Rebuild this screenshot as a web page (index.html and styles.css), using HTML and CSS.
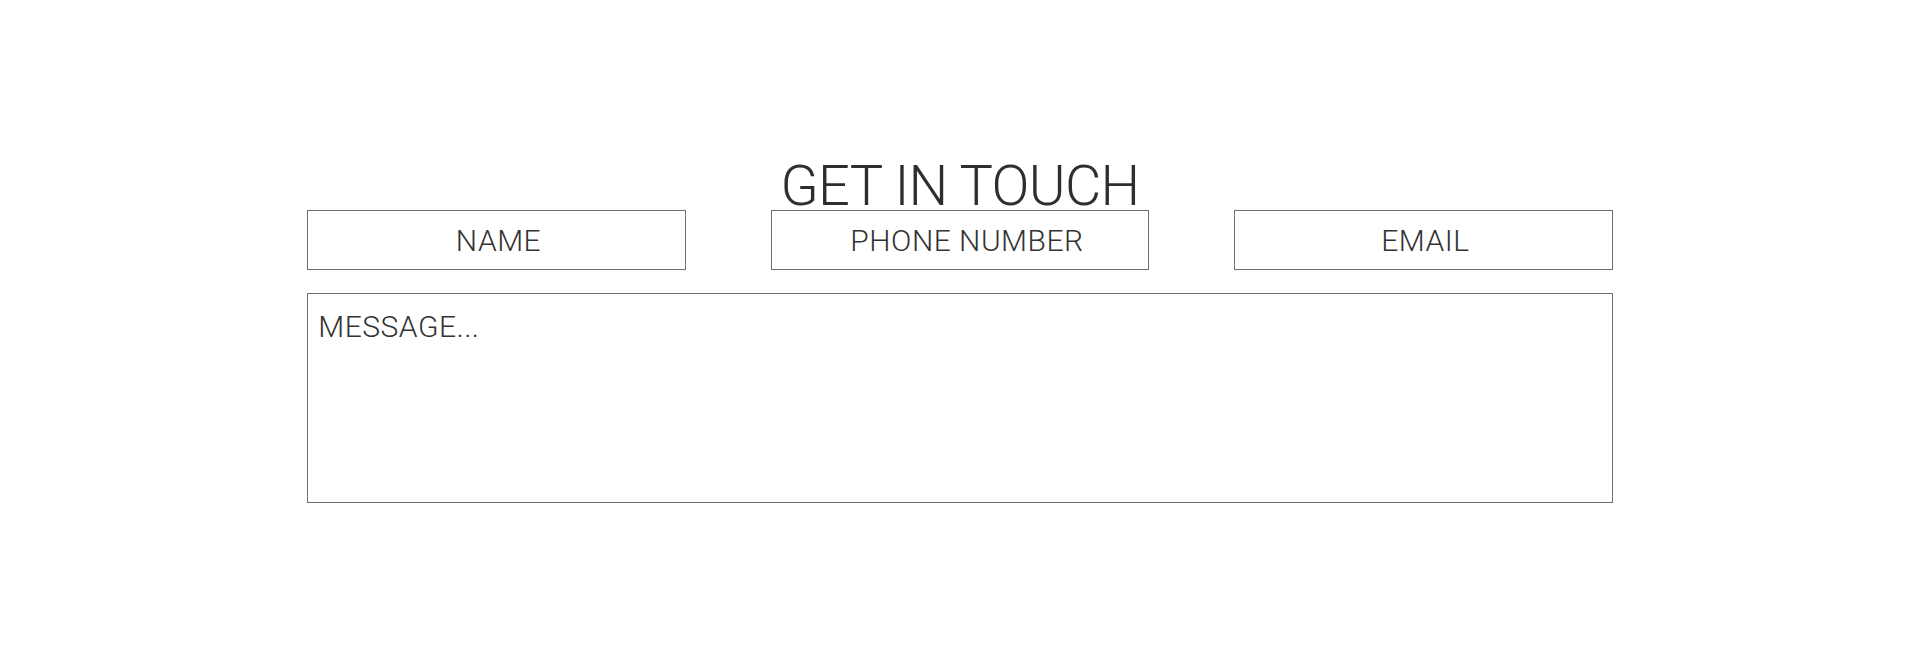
FILE: index.html
```html
<!DOCTYPE html>
<html lang="en">
<head>
<meta charset="utf-8">
<title>Get in touch</title>
<link rel="stylesheet" href="styles.css">
</head>
<body>
<section class="contact">
  <h1 class="contact-title">GET IN TOUCH</h1>
  <form class="contact-form">
    <div class="contact-row">
      <input class="contact-field" type="text" placeholder="NAME">
      <input class="contact-field contact-field--phone" type="tel" placeholder="PHONE NUMBER">
      <input class="contact-field" type="email" placeholder="EMAIL">
    </div>
    <textarea class="contact-message" placeholder="MESSAGE..."></textarea>
  </form>
</section>
</body>
</html>
```

FILE: styles.css
```css
html, body {
  margin: 0;
  padding: 0;
  background: #ffffff;
}

body {
  font-family: Roboto, "Liberation Sans", Arial, sans-serif;
  font-weight: 300;
  color: #333333;
}

.contact {
  width: 68%;
  margin: 0 auto;
  padding-top: 162px;
}

.contact-title {
  margin: 0;
  text-align: center;
  font-size: 56px;
  line-height: 48px;
  letter-spacing: -0.7px;
  font-weight: 300;
  color: #2e2e2e;
}

.contact-form {
  display: flex;
  flex-direction: column;
  gap: 23px;
}

.contact-row {
  display: flex;
  justify-content: space-between;
}

.contact-field,
.contact-message {
  box-sizing: border-box;
  border: 1px solid #6f6f6f;
  border-radius: 0;
  background: #ffffff;
  font-family: inherit;
  font-weight: 300;
  font-size: 30px;
  letter-spacing: 0.5px;
  color: #333333;
  outline: none;
  margin: 0;
}

.contact-field {
  width: 29%;
  height: 60px;
  padding: 0 10px 0 14px;
  text-align: center;
}

.contact-field--phone {
  padding-left: 24px;
}

.contact-message {
  display: block;
  width: 100%;
  height: 210px;
  padding: 15px 10px;
  resize: none;
}

.contact-field::placeholder,
.contact-message::placeholder {
  color: #333333;
  opacity: 1;
}
```
